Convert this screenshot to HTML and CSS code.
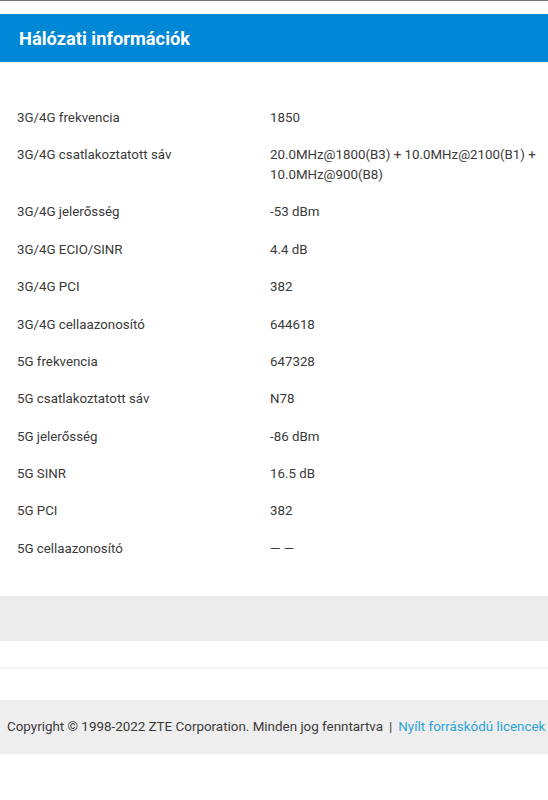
FILE: index.html
```html
<!DOCTYPE html>
<html lang="hu">
  <head>
    <meta charset="UTF-8" />
    <meta name="viewport" content="width=device-width, initial-scale=1.0" />
    <title>Hálózati információk</title>
    <link rel="stylesheet" href="styles.css">
  </head>
  <body>
    <div class="topline"></div>
    <div class="header">
      <h1>Hálózati információk</h1>
    </div>

    <div class="info">
      <div class="row"><div class="label">3G/4G frekvencia</div><div class="value">1850</div></div>
      <div class="row"><div class="label">3G/4G csatlakoztatott sáv</div><div class="value">20.0MHz@1800(B3) + 10.0MHz@2100(B1) + 10.0MHz@900(B8)</div></div>
      <div class="row"><div class="label">3G/4G jelerősség</div><div class="value">-53 dBm</div></div>
      <div class="row"><div class="label">3G/4G ECIO/SINR</div><div class="value">4.4 dB</div></div>
      <div class="row"><div class="label">3G/4G PCI</div><div class="value">382</div></div>
      <div class="row"><div class="label">3G/4G cellaazonosító</div><div class="value">644618</div></div>
      <div class="row"><div class="label">5G frekvencia</div><div class="value">647328</div></div>
      <div class="row"><div class="label">5G csatlakoztatott sáv</div><div class="value">N78</div></div>
      <div class="row"><div class="label">5G jelerősség</div><div class="value">-86 dBm</div></div>
      <div class="row"><div class="label">5G SINR</div><div class="value">16.5 dB</div></div>
      <div class="row"><div class="label">5G PCI</div><div class="value">382</div></div>
      <div class="row"><div class="label">5G cellaazonosító</div><div class="value">— —</div></div>
    </div>

    <div class="band"></div>
    <div class="divider"></div>

    <div class="footer">
      Copyright © 1998-2022 ZTE Corporation. Minden jog fenntartva <span class="sep">|</span> <a href="#">Nyílt forráskódú licencek</a>
    </div>
  </body>
</html>
```

FILE: styles.css
```css
body {
  font-family: Roboto, "Liberation Sans", sans-serif;
  background-color: #fff;
  color: #3a3a3a;
  margin: 0;
  padding: 0;
}

.topline {
  height: 1px;
  background-color: #777;
  margin-bottom: 13px;
}

.header {
  background-color: #0088d6;
  height: 48px;
  display: flex;
  align-items: center;
  padding: 0 19px;
}

h1 {
  margin: 0;
  color: #fff;
  font-size: 18.3px;
  font-weight: bold;
}

.info {
  padding: 37px 0 28px;
}

.row {
  display: flex;
  padding: 8.7px 0;
  font-size: 13.3px;
  line-height: 20px;
}

.label {
  width: 253px;
  padding-left: 17px;
  flex-shrink: 0;
}

.value {
  flex: 1;
  padding-right: 8px;
}

.band {
  height: 45px;
  background-color: #ececec;
}

.divider {
  height: 2px;
  background-color: #f3f3f3;
  margin: 26px 0 31px;
}

.footer {
  background-color: #eeeeee;
  height: 54px;
  display: flex;
  align-items: center;
  padding-left: 7px;
  font-size: 13.4px;
  white-space: nowrap;
}

.sep {
  margin: 0 6px;
}

.footer a {
  color: #2aa5d8;
  text-decoration: none;
}
```
